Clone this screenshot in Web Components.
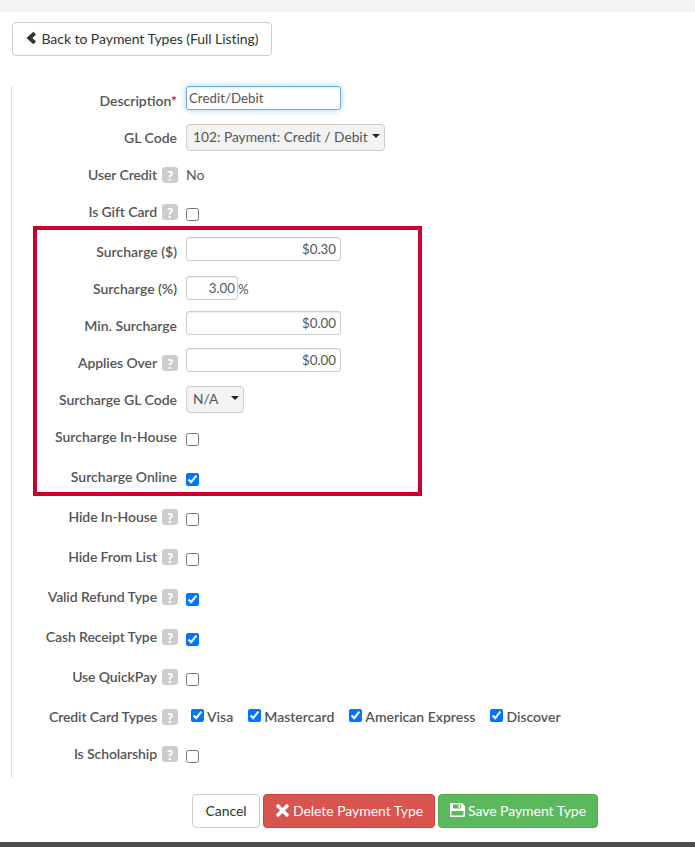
<!DOCTYPE html>
<html>
<head>
<meta charset="utf-8">
<title>Payment Type</title>
<style>
  html, body { margin: 0; height: 847px; overflow: hidden; background: #fff; }
  body { font-family: Lato, "Liberation Sans", sans-serif; font-size: 14px; color: #555; }
</style>
</head>
<body>
<payment-page>
  <action-button slot="top" kind="default" icon="back" style="width:260px;gap:4px">Back to Payment Types (Full Listing)</action-button>

  <form-row gap="0" label="Description" required><text-field width="155" align="left" focused>Credit/Debit</text-field></form-row>
  <form-row gap="13" label="GL Code"><select-field width="199">102: Payment: Credit / Debit</select-field></form-row>
  <form-row gap="13" label="User Credit" help><span style="margin-bottom:2px">No</span></form-row>
  <form-row gap="13" label="Is Gift Card" help><tick-box></tick-box></form-row>

  <form-row gap="16" label="Surcharge ($)"><text-field width="155">$0.30</text-field></form-row>
  <form-row gap="13" label="Surcharge (%)"><text-field width="52" short>3.00</text-field><span style="font-size:13.33px">%</span></form-row>
  <form-row gap="13" label="Min. Surcharge"><text-field width="155">$0.00</text-field></form-row>
  <form-row gap="13" label="Applies Over" help><text-field width="155">$0.00</text-field></form-row>
  <form-row gap="13" label="Surcharge GL Code"><select-field width="58">N/A</select-field></form-row>
  <form-row gap="13" label="Surcharge In-House"><tick-box></tick-box></form-row>
  <form-row gap="16" label="Surcharge Online"><tick-box checked></tick-box></form-row>

  <form-row gap="16" label="Hide In-House" help><tick-box></tick-box></form-row>
  <form-row gap="16" label="Hide From List" help><tick-box></tick-box></form-row>
  <form-row gap="16" label="Valid Refund Type" help><tick-box checked></tick-box></form-row>
  <form-row gap="16" label="Cash Receipt Type" help><tick-box checked></tick-box></form-row>
  <form-row gap="16" label="Use QuickPay" help><tick-box></tick-box></form-row>
  <form-row gap="16" label="Credit Card Types" help>
    <card-types>
      <tick-box checked>Visa</tick-box>
      <tick-box checked>Mastercard</tick-box>
      <tick-box checked>American Express</tick-box>
      <tick-box checked>Discover</tick-box>
    </card-types>
  </form-row>
  <form-row gap="13" label="Is Scholarship" help><tick-box></tick-box></form-row>

  <action-button slot="actions" kind="default" style="width:68px">Cancel</action-button>
  <action-button slot="actions" kind="danger" icon="remove" style="width:172px">Delete Payment Type</action-button>
  <action-button slot="actions" kind="success" icon="save" style="width:160px">Save Payment Type</action-button>
</payment-page>

<script>
class PaymentPage extends HTMLElement {
  constructor() {
    super()
    this.attachShadow({ mode: "open" })
    this.shadowRoot.innerHTML = `
      <style>
        :host { display: flex; flex-direction: column; height: 847px; position: relative; }
        .top { height: 12px; background: #f4f4f4; }
        .back { display: flex; padding: 10px 12px 0; }
        .form { margin: 30px 0 0 11px; padding: 3px 0 0; border-left: 1px solid #ddd; height: 692px; box-sizing: border-box; }
        .actions { display: flex; gap: 3px; padding: 16px 0 0 192px; }
        .foot { margin-top: auto; height: 5px; background: #4d4d4d; }
        .mark { position: absolute; left: 33px; top: 226px; width: 389px; height: 270px; box-sizing: border-box; border: 4px solid #c8002a; pointer-events: none; }
      </style>
      <div class="top"></div>
      <div class="back"><slot name="top"></slot></div>
      <div class="form"><slot></slot></div>
      <div class="actions"><slot name="actions"></slot></div>
      <div class="foot"></div>
      <div class="mark"></div>
    `
  }
}

class FormRow extends HTMLElement {
  constructor() {
    super()
    this.attachShadow({ mode: "open" })
  }

  connectedCallback() {
    const star = this.hasAttribute("required") ? `<i>*</i>` : ""
    const hasHelp = this.hasAttribute("help")
    const help = hasHelp ? `<help-badge></help-badge>` : ""
    this.shadowRoot.innerHTML = `
      <style>
        :host { display: flex; align-items: center; height: 24px; margin-top: ${this.getAttribute("gap") || 0}px; }
        label { width: 165px; display: flex; justify-content: flex-end; align-items: center; gap: 5px; font-weight: 600; color: #555; white-space: nowrap; }
        label span { margin-bottom: 2px; letter-spacing: ${hasHelp ? "-.1px" : "0"}; }
        help-badge { margin-right: -1px; }
        i { color: #c8002a; font-style: normal; }
        .field { margin-left: 9px; display: flex; align-items: center; }
      </style>
      <label><span>${this.getAttribute("label")}${star}</span>${help}</label>
      <div class="field"><slot></slot></div>
    `
  }
}

class HelpBadge extends HTMLElement {
  constructor() {
    super()
    this.attachShadow({ mode: "open" })
    this.shadowRoot.innerHTML = `
      <style>
        :host { display: inline-flex; align-items: center; justify-content: center; width: 16px; height: 16px; border-radius: 3px; background: #ccc; color: #fff; font: 900 14px Lato, sans-serif; }
      </style>?
    `
  }
}

class TextField extends HTMLElement {
  constructor() {
    super()
    this.attachShadow({ mode: "open" })
  }

  connectedCallback() {
    const focused = this.hasAttribute("focused")
    const short = this.hasAttribute("short")
    this.shadowRoot.innerHTML = `
      <style>
        :host { display: block; box-sizing: border-box; width: ${this.getAttribute("width")}px; height: 24px; line-height: 23px;
          margin-bottom: ${short ? 2 : 6}px; padding: 0 ${short ? 2 : 4}px 0 2px; font-size: 13.33px;
          border: 1px solid ${focused ? "#66afe9" : "#ccc"}; border-radius: 3px; background: #fff;
          text-align: ${this.getAttribute("align") || "right"}; color: #555;
          box-shadow: ${focused ? "inset 0 1px 1px rgba(0,0,0,.075), 0 0 6px rgba(102,175,233,.6)" : "inset 0 1px 1px rgba(0,0,0,.075)"}; }
      </style>
      <slot></slot>
    `
  }
}

class SelectField extends HTMLElement {
  constructor() {
    super()
    this.attachShadow({ mode: "open" })
  }

  connectedCallback() {
    this.shadowRoot.innerHTML = `
      <style>
        :host { display: flex; align-items: center; box-sizing: border-box; width: ${this.getAttribute("width")}px; height: 27px; margin-bottom: 2px; padding: 0 4px 2px 6px;
          border: 1px solid #ccc; border-radius: 4px; background: #f3f3f3; color: #555; font-size: 13.75px; white-space: nowrap; }
        .txt { flex: 1; }
        .caret { width: 0; height: 0; border: 4px solid transparent; border-top-color: #222; border-bottom: 0; margin-bottom: 1px; }
      </style>
      <span class="txt"><slot></slot></span><span class="caret"></span>
    `
  }
}

class TickBox extends HTMLElement {
  constructor() {
    super()
    this.attachShadow({ mode: "open" })
  }

  connectedCallback() {
    const on = this.hasAttribute("checked") ? "checked" : ""
    const named = this.textContent.trim() !== ""
    this.shadowRoot.innerHTML = `
      <style>
        :host { display: inline-flex; align-items: center; gap: 3px; font-weight: 600; color: #555; white-space: nowrap; }
        input { width: 13px; height: 13px; margin: ${named ? "0 0 1px" : "5px 0 0"}; accent-color: #0075ff; }
      </style>
      <input type="checkbox" ${on}><span><slot></slot></span>
    `
  }
}

class CardTypes extends HTMLElement {
  constructor() {
    super()
    this.attachShadow({ mode: "open" })
    this.shadowRoot.innerHTML = `
      <style>
        :host { display: flex; gap: 15px; margin: 0 0 2px 5px; }
      </style>
      <slot></slot>
    `
  }
}

const ICONS = {
  back: `<svg width="12" height="14" viewBox="0 0 12 14"><path d="M8.4 0.8 L11 3.4 L7.4 7 L11 10.6 L8.4 13.2 L1.4 7 Z" fill="#333"/></svg>`,
  remove: `<svg width="15" height="15" viewBox="0 0 15 15"><path d="M3.2 0.8 L7.5 5 L11.8 0.8 L14.2 3.2 L10 7.5 L14.2 11.8 L11.8 14.2 L7.5 10 L3.2 14.2 L0.8 11.8 L5 7.5 L0.8 3.2 Z" fill="#fff"/></svg>`,
  save: `<svg width="15" height="14" viewBox="0 0 15 14"><path fill-rule="evenodd" d="M1 0 H12 L15 3 V13 a1 1 0 0 1 -1 1 H1 a1 1 0 0 1 -1 -1 V1 a1 1 0 0 1 1 -1 Z M3 1.5 V5.5 H11 V1.5 Z M1.5 8 V12.5 H13.5 V8 Z M8.5 2 H10 V5 H8.5 Z" fill="#fff"/></svg>`
}

class ActionButton extends HTMLElement {
  constructor() {
    super()
    this.attachShadow({ mode: "open" })
  }

  connectedCallback() {
    const colours = {
      default: "background:#fff;border-color:#ccc;color:#333",
      danger: "background:#d9534f;border-color:#d43f3a;color:#fff",
      success: "background:#5cb85c;border-color:#4cae4c;color:#fff"
    }
    const icon = ICONS[this.getAttribute("icon")] || ""
    this.shadowRoot.innerHTML = `
      <style>
        :host { display: flex; align-items: center; justify-content: center; gap: 3px; box-sizing: border-box; height: 34px; padding-bottom: 2px; border: 1px solid; border-radius: 4px; white-space: nowrap; letter-spacing: -.05px; ${colours[this.getAttribute("kind")]} }
        svg { display: block; flex: none; }
      </style>
      ${icon}<slot></slot>
    `
  }
}

customElements.define("payment-page", PaymentPage)
customElements.define("form-row", FormRow)
customElements.define("help-badge", HelpBadge)
customElements.define("text-field", TextField)
customElements.define("select-field", SelectField)
customElements.define("tick-box", TickBox)
customElements.define("card-types", CardTypes)
customElements.define("action-button", ActionButton)
</script>
</body>
</html>
